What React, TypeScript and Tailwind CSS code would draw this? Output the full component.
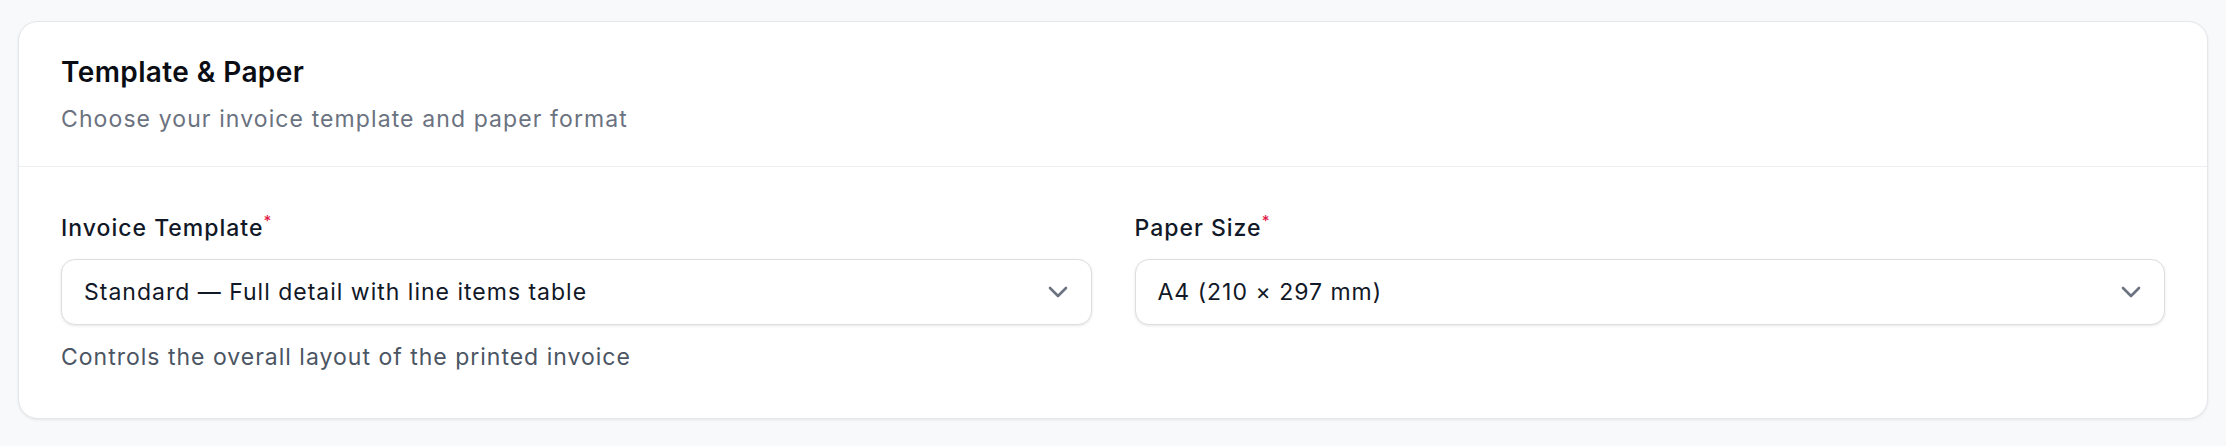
import React from "react";

function Chevron() {
  return (
    <svg width="20" height="12" viewBox="0 0 20 12" fill="none" className="shrink-0">
      <path d="M2 2l8 8 8-8" stroke="#6b7280" strokeWidth="2.6" strokeLinecap="round" strokeLinejoin="round" />
    </svg>
  );
}

function Field({ label, value, help }: { label: string; value: string; help?: string }) {
  return (
    <div className="flex flex-col">
      <div className="text-[23px] leading-[30px] tracking-[1px] font-medium text-[#111827]">
        {label}
        <span className="text-[#e11d48] text-[15px] leading-none align-[10px] tracking-normal">*</span>
      </div>
      <div className="mt-[16px] h-[66px] flex items-center justify-between pl-[22px] pr-[23px] bg-white border border-[#dcdee2] rounded-[14px] shadow-[0_1px_3px_rgba(0,0,0,0.1)]">
        <span className="text-[23px] tracking-[1px] text-[#111827]">{value}</span>
        <Chevron />
      </div>
      {help && <div className="mt-[17px] text-[23px] leading-[30px] tracking-[1px] text-[#4b5563]">{help}</div>}
    </div>
  );
}

export default function App() {
  return (
    <div className="min-h-[446px] bg-[#f8f9fb] px-[18px] pt-[21px] pb-[26px]" style={{ fontFamily: "Inter, 'Noto Sans', sans-serif" }}>
      <div className="bg-white border border-[#e5e7eb] rounded-[20px] shadow-[0_1px_3px_rgba(0,0,0,0.08)]">
        <div className="px-[42px] py-[32px] border-b border-[#eceef1]">
          <div className="text-[28px] leading-[36px] tracking-[0.4px] font-semibold text-[#0b0d14]">Template &amp; Paper</div>
          <div className="mt-[14px] text-[23px] leading-[30px] tracking-[1.1px] text-[#6b7280]">Choose your invoice template and paper format</div>
        </div>
        <div className="px-[42px] pt-[46px] pb-[46px] grid grid-cols-2 gap-[43px]">
          <Field label="Invoice Template" value="Standard — Full detail with line items table" help="Controls the overall layout of the printed invoice" />
          <Field label="Paper Size" value="A4 (210 × 297 mm)" />
        </div>
      </div>
    </div>
  );
}
